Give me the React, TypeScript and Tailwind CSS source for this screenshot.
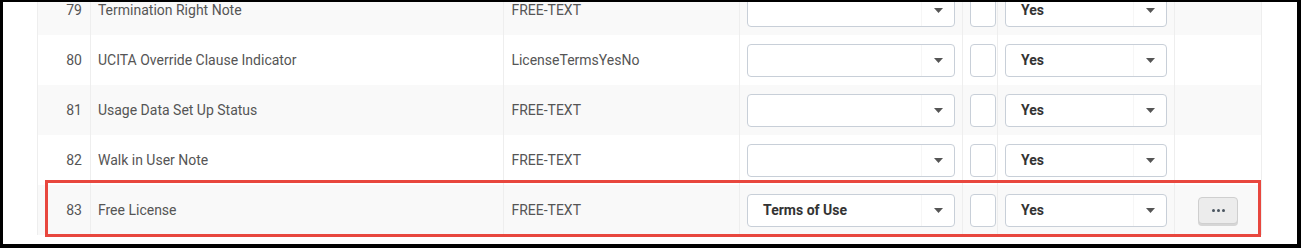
import { type ReactNode } from 'react';

type Row = {
  num: number;
  name: string;
  type: string;
  term: string;
  yes: string;
  actions?: boolean;
};

const rows: Row[] = [
  { num: 79, name: 'Termination Right Note', type: 'FREE-TEXT', term: '', yes: 'Yes' },
  { num: 80, name: 'UCITA Override Clause Indicator', type: 'LicenseTermsYesNo', term: '', yes: 'Yes' },
  { num: 81, name: 'Usage Data Set Up Status', type: 'FREE-TEXT', term: '', yes: 'Yes' },
  { num: 82, name: 'Walk in User Note', type: 'FREE-TEXT', term: '', yes: 'Yes' },
  { num: 83, name: 'Free License', type: 'FREE-TEXT', term: 'Terms of Use', yes: 'Yes', actions: true },
];

function Caret() {
  return (
    <svg width="9" height="5" viewBox="0 0 9 5" className="text-[#555]">
      <path d="M0 0h9L4.5 5z" fill="currentColor" />
    </svg>
  );
}

function Select({ value, className }: { value: string; className: string }) {
  return (
    <div
      className={`flex h-[33px] items-stretch rounded-[4px] border border-[#c8cfd8] bg-white ${className}`}
    >
      <div className="flex flex-1 items-center pl-[15px] text-[14px] font-bold text-[#333]">
        {value}
      </div>
      <div className="flex w-[33px] items-center justify-center border-l border-[#f6f6f6]">
        <Caret />
      </div>
    </div>
  );
}

function Cell({ className, children }: { className: string; children?: ReactNode }) {
  return <div className={`flex h-full items-center border-r border-[#eeeeee] ${className}`}>{children}</div>;
}

export default function App() {
  return (
    <div
      className="relative h-[248px] w-[1301px] overflow-hidden border-t-[2px] border-r-[4px] border-b-[4px] border-l-[3px] border-black bg-white"
      style={{ fontFamily: 'Roboto, "Liberation Sans", sans-serif' }}
    >
      <div className="-mt-[17px] ml-[34px] flex w-[1225px] flex-col border-l border-[#eeeeee] text-[14px] text-[#555]">
        {rows.map((r, i) => (
          <div
            key={r.num}
            className={`flex h-[50px] ${i % 2 === 0 ? 'bg-[#f9f9f9]' : 'bg-white'}`}
          >
            <Cell className="w-[53px] justify-end pr-[8px]">{r.num}</Cell>
            <Cell className="w-[414px] pl-[7px]">{r.name}</Cell>
            <Cell className="w-[236px] pl-[7px]">{r.type}</Cell>
            <Cell className="w-[223px] px-[7px]">
              <Select value={r.term} className="w-[209px]" />
            </Cell>
            <Cell className="w-[35px] pl-[7px]">
              <div className="h-[33px] w-[26px] rounded-[4px] border border-[#c8cfd8] bg-white" />
            </Cell>
            <Cell className="w-[177px] px-[7px]">
              <Select value={r.yes} className="w-[163px]" />
            </Cell>
            <Cell className="w-[87px] pl-[23px]">
              {r.actions && (
                <button className="flex h-[27px] w-[40px] items-center justify-center rounded-[4px] border border-[#cfcfcf] bg-[#ececec] shadow-[0_2px_0_#d6d6d6]">
                  <span className="flex gap-[2px]">
                    <span className="h-[3px] w-[3px] rounded-full bg-[#4a5560]" />
                    <span className="h-[3px] w-[3px] rounded-full bg-[#4a5560]" />
                    <span className="h-[3px] w-[3px] rounded-full bg-[#4a5560]" />
                  </span>
                </button>
              )}
            </Cell>
          </div>
        ))}
      </div>
      <div className="pointer-events-none absolute top-[178px] left-[42px] h-[57px] w-[1216px] border-[3px] border-[#e8473e]" />
    </div>
  );
}
